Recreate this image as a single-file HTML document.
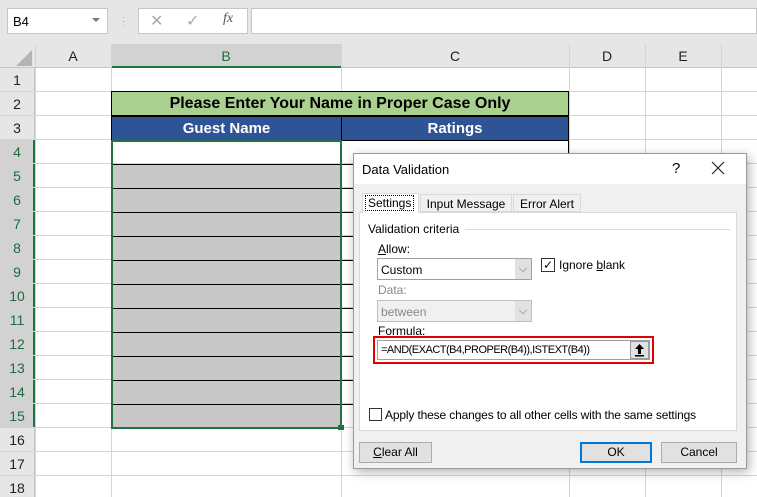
<!DOCTYPE html>
<html><head><style>
*{margin:0;padding:0;box-sizing:border-box}
body{width:757px;height:497px;overflow:hidden;background:#fff;font-family:"Liberation Sans",sans-serif;position:relative}
.a{position:absolute}
.t{font-size:12px;color:#000}
</style></head><body>
<div class="a" style="left:0;top:0;width:757px;height:44px;background:#e6e6e6"></div>
<div class="a" style="left:7px;top:8px;width:101px;height:26px;background:#fff;border:1px solid #c6c6c6"></div>
<div class="a t" style="left:13px;top:14px;font-size:13px">B4</div>
<div class="a" style="left:92px;top:18px;border-left:4px solid transparent;border-right:4px solid transparent;border-top:4px solid #777"></div>
<div class="a" style="left:122px;top:16px;color:#aaa;font-size:10px;line-height:4px">·<br>·<br>·</div>
<div class="a" style="left:138px;top:8px;width:110px;height:26px;background:#fff;border:1px solid #c6c6c6"></div>
<div class="a" style="left:150px;top:11px;color:#aaa;font-size:16px">✕</div>
<div class="a" style="left:186px;top:11px;color:#aaa;font-size:16px">✓</div>
<div class="a" style="left:223px;top:11px;color:#555;font-size:14px;font-style:italic;font-family:'Liberation Serif',serif">fx</div>
<div class="a" style="left:251px;top:8px;width:506px;height:26px;background:#fff;border:1px solid #c6c6c6"></div>
<div class="a" style="left:0;top:44px;width:757px;height:24px;background:#e6e6e6;border-bottom:1px solid #c6c6c6"></div>
<div class="a" style="left:16px;top:50px;width:0;height:0;border-left:16px solid transparent;border-bottom:16px solid #b4b4b4"></div>
<div class="a" style="left:111px;top:44px;width:230px;height:24px;background:#d2d2d2;border-bottom:2px solid #217346"></div>
<div class="a" style="left:0;top:68px;width:35px;height:429px;background:#e6e6e6;border-right:1px solid #c6c6c6"></div>
<div class="a" style="left:0;top:140px;width:35px;height:288px;background:#d2d2d2;border-right:2px solid #217346"></div>
<svg class="a" style="left:0;top:44px" width="757" height="453">
<g stroke="#d4d4d4" stroke-width="1">
<line x1="35.5" y1="0" x2="35.5" y2="453"/><line x1="111.5" y1="0" x2="111.5" y2="453"/>
<line x1="341.5" y1="0" x2="341.5" y2="453"/><line x1="569.5" y1="0" x2="569.5" y2="453"/>
<line x1="645.5" y1="0" x2="645.5" y2="453"/><line x1="721.5" y1="0" x2="721.5" y2="453"/>
<line x1="0" y1="47.5" x2="757" y2="47.5"/><line x1="0" y1="71.5" x2="757" y2="71.5"/>
<line x1="0" y1="95.5" x2="757" y2="95.5"/><line x1="0" y1="119.5" x2="757" y2="119.5"/>
<line x1="0" y1="143.5" x2="757" y2="143.5"/><line x1="0" y1="167.5" x2="757" y2="167.5"/>
<line x1="0" y1="191.5" x2="757" y2="191.5"/><line x1="0" y1="215.5" x2="757" y2="215.5"/>
<line x1="0" y1="239.5" x2="757" y2="239.5"/><line x1="0" y1="263.5" x2="757" y2="263.5"/>
<line x1="0" y1="287.5" x2="757" y2="287.5"/><line x1="0" y1="311.5" x2="757" y2="311.5"/>
<line x1="0" y1="335.5" x2="757" y2="335.5"/><line x1="0" y1="359.5" x2="757" y2="359.5"/>
<line x1="0" y1="383.5" x2="757" y2="383.5"/><line x1="0" y1="407.5" x2="757" y2="407.5"/>
<line x1="0" y1="431.5" x2="757" y2="431.5"/>
</g>
<g font-family="Liberation Sans" font-size="14" fill="#222" text-anchor="middle">
<text x="73" y="17">A</text><text x="226" y="17" fill="#1e6b3c">B</text><text x="455" y="17">C</text><text x="607" y="17">D</text><text x="683" y="17">E</text>
</g>
<g font-family="Liberation Sans" font-size="14" text-anchor="middle" fill="#222">
<text x="17" y="41">1</text><text x="17" y="65">2</text><text x="17" y="89">3</text>
<g fill="#1e6b3c"><text x="17" y="113">4</text><text x="17" y="137">5</text><text x="17" y="161">6</text><text x="17" y="185">7</text><text x="17" y="209">8</text><text x="17" y="233">9</text><text x="17" y="257">10</text><text x="17" y="281">11</text><text x="17" y="305">12</text><text x="17" y="329">13</text><text x="17" y="353">14</text><text x="17" y="377">15</text></g>
<text x="17" y="401">16</text><text x="17" y="425">17</text><text x="17" y="449">18</text>
</g>
</svg>
<div class="a" style="left:111px;top:91px;width:458px;height:25px;background:#a9d08e;border:1px solid #000;font-weight:bold;font-size:16px;text-align:center;line-height:23px">Please Enter Your Name in Proper Case Only</div>
<div class="a" style="left:111px;top:116px;width:231px;height:25px;background:#2f5496;border:1px solid #000;color:#fff;font-weight:bold;font-size:15px;text-align:center;line-height:23px">Guest Name</div>
<div class="a" style="left:341px;top:116px;width:228px;height:25px;background:#2f5496;border:1px solid #000;color:#fff;font-weight:bold;font-size:15px;text-align:center;line-height:23px">Ratings</div>
<div class="a" style="left:341px;top:140px;width:228px;height:288px;border-right:1px solid #000"></div>
<div class="a" style="left:113px;top:164px;width:227px;height:264px;background:#c8c8c8"></div>
<svg class="a" style="left:111px;top:140px" width="460" height="290">
<g stroke="#000"><line x1="2" y1="24.5" x2="458" y2="24.5"/><line x1="2" y1="48.5" x2="458" y2="48.5"/><line x1="2" y1="72.5" x2="458" y2="72.5"/><line x1="2" y1="96.5" x2="458" y2="96.5"/><line x1="2" y1="120.5" x2="458" y2="120.5"/><line x1="2" y1="144.5" x2="458" y2="144.5"/><line x1="2" y1="168.5" x2="458" y2="168.5"/><line x1="2" y1="192.5" x2="458" y2="192.5"/><line x1="2" y1="216.5" x2="458" y2="216.5"/><line x1="2" y1="240.5" x2="458" y2="240.5"/><line x1="2" y1="264.5" x2="458" y2="264.5"/><line x1="230.5" y1="0" x2="230.5" y2="288"/></g>
<rect x="1" y="1" width="229" height="287" fill="none" stroke="#217346" stroke-width="2"/>
<rect x="227" y="285" width="6" height="6" fill="#217346"/>
</svg>
<div class="a" style="left:353px;top:153px;width:394px;height:316px;background:#f0f0f0;border:1px solid #9a9a9a;box-shadow:2px 3px 10px rgba(0,0,0,.3)"></div>
<div class="a" style="left:354px;top:154px;width:392px;height:30px;background:#fff"></div>
<div class="a t" style="left:362px;top:162px;font-size:13px">Data Validation</div>
<div class="a t" style="left:672px;top:160px;font-size:15px">?</div>
<svg class="a" style="left:711px;top:161px" width="14" height="14"><path d="M1 1L13 13M13 1L1 13" stroke="#222" stroke-width="1.2"/></svg>
<div class="a" style="left:359px;top:212px;width:378px;height:219px;background:#fff;border:1px solid #d9d9d9"></div>
<div class="a" style="left:362px;top:193px;width:57px;height:20px;background:#fff;border:1px solid #d9d9d9;border-bottom:none"></div>
<div class="a t" style="left:365px;top:195px;border:1px dotted #000;padding:0 2px;font-size:12px">Settings</div>
<div class="a t" style="left:420px;top:194px;width:92px;height:18px;border:1px solid #d9d9d9;text-align:center;line-height:18px">Input Message</div>
<div class="a t" style="left:513px;top:194px;width:68px;height:18px;border:1px solid #d9d9d9;text-align:center;line-height:18px">Error Alert</div>
<div class="a t" style="left:368px;top:222px">Validation criteria</div>
<div class="a" style="left:465px;top:229px;width:265px;height:1px;background:#ddd"></div>
<div class="a t" style="left:378px;top:242px"><u>A</u>llow:</div>
<div class="a" style="left:377px;top:258px;width:155px;height:22px;border:1px solid #a0a0a0;background:#fff"></div>
<div class="a" style="left:515px;top:259px;width:16px;height:20px;background:#e1e1e1;color:#666;font-size:11px;text-align:center;line-height:20px">⌵</div>
<div class="a t" style="left:381px;top:263px">Custom</div>
<div class="a" style="left:541px;top:258px;width:14px;height:14px;border:1px solid #333;background:#fff;font-size:12px;line-height:12px;text-align:center">✓</div>
<div class="a t" style="left:559px;top:258px">Ignore <u>b</u>lank</div>
<div class="a t" style="left:378px;top:283px;color:#888">Data:</div>
<div class="a" style="left:377px;top:300px;width:155px;height:22px;border:1px solid #c0c0c0;background:#f0f0f0"></div>
<div class="a" style="left:515px;top:301px;width:16px;height:20px;background:#e1e1e1;color:#666;font-size:11px;text-align:center;line-height:20px">⌵</div>
<div class="a t" style="left:381px;top:305px;color:#888">between</div>
<div class="a t" style="left:378px;top:324px">Formula:</div>
<div class="a" style="left:373px;top:336px;width:281px;height:28px;border:2px solid #e00000"></div>
<div class="a" style="left:377px;top:340px;width:273px;height:20px;border:1px solid #a0a0a0;background:#fff"></div>
<div class="a t" style="left:381px;top:344px;font-size:11px;letter-spacing:-0.5px">=AND(EXACT(B4,PROPER(B4)),ISTEXT(B4))</div>
<div class="a" style="left:630px;top:341px;width:19px;height:18px;background:#e1e1e1;border:1px solid #999"></div>
<svg class="a" style="left:634px;top:343px" width="11" height="14"><path d="M5.5 1L1 6H4V11H7V6H10Z" fill="#000"/><rect x="1" y="12" width="9" height="1.5" fill="#000"/></svg>
<div class="a" style="left:369px;top:408px;width:13px;height:13px;border:1px solid #333;background:#fff"></div>
<div class="a t" style="left:385px;top:408px;letter-spacing:-0.15px">Apply these changes to all other cells with the same settings</div>
<div class="a t" style="left:359px;top:442px;width:73px;height:21px;background:#e1e1e1;border:1px solid #adadad;text-align:center;line-height:19px"><u>C</u>lear All</div>
<div class="a t" style="left:580px;top:442px;width:72px;height:21px;background:#e1e1e1;border:2px solid #0078d7;text-align:center;line-height:17px">OK</div>
<div class="a t" style="left:661px;top:442px;width:76px;height:21px;background:#e1e1e1;border:1px solid #adadad;text-align:center;line-height:19px">Cancel</div>
</body></html>
